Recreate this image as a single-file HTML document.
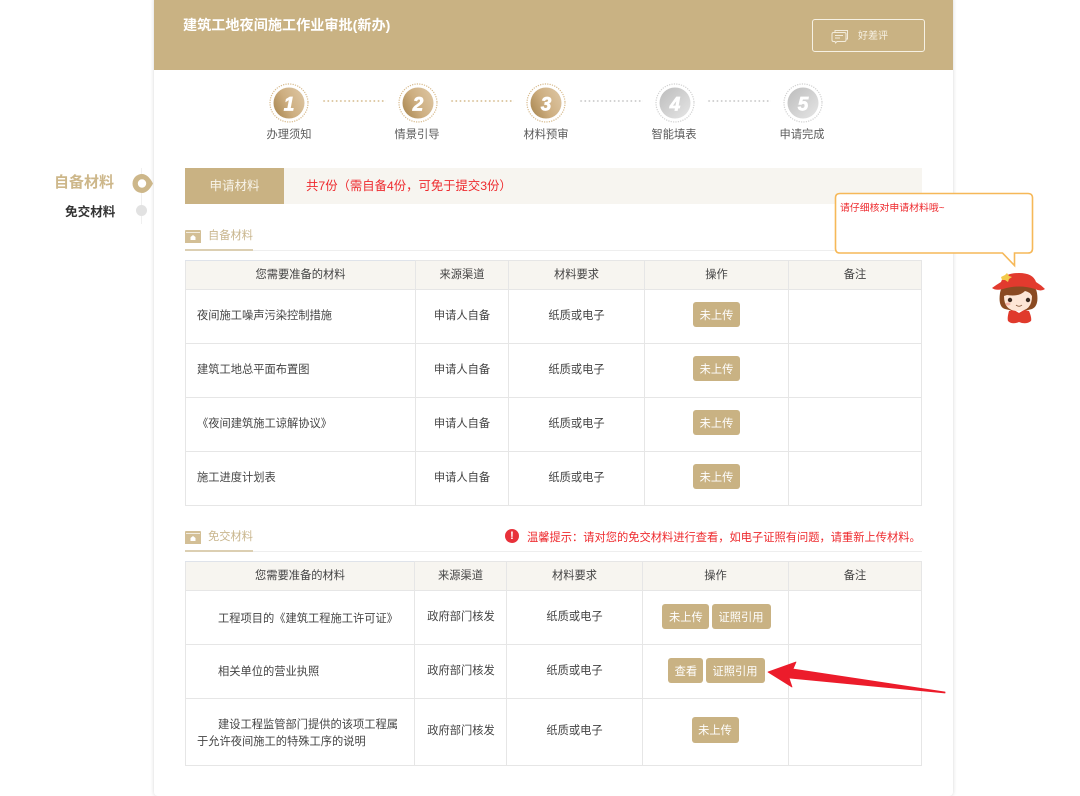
<!DOCTYPE html>
<html lang="zh-CN">
<head>
<meta charset="utf-8">
<title>建筑工地夜间施工作业审批(新办)</title>
<style>
html,body{margin:0;padding:0;background:#fff;}
body{width:1080px;height:785px;overflow:hidden;position:relative;font-family:"Liberation Sans","Noto Sans CJK SC",sans-serif;color:#444;font-size:11.25px;}
.a{position:absolute;white-space:nowrap;}
#card{position:absolute;left:154px;top:-4px;width:799px;height:800px;background:#fff;border-radius:4px;box-shadow:0 0 4px rgba(0,0,0,.16);}
#head{position:absolute;left:154px;top:0;width:799px;height:70px;background:#c9b283;}
.c{position:absolute;top:83px;width:40px;height:40px;}
.c text{font-family:"Liberation Sans",sans-serif;font-size:19px;font-weight:700;font-style:italic;fill:#fff;stroke:#fff;stroke-width:.7px;text-anchor:middle;}
.lab{position:absolute;top:128px;width:80px;text-align:center;font-size:11.25px;line-height:15px;color:#5a5a5a;}
.dots{position:absolute;top:100px;width:64px;height:2px;background-image:radial-gradient(circle,var(--d) .8px,transparent 1.1px);background-size:4.2px 2px;}
table{position:absolute;border-collapse:collapse;table-layout:fixed;background:#fff;}
td,th{border:1px solid #e6e6e6;text-align:center;font-weight:400;font-size:11.25px;color:#444;padding:0;line-height:20px;}
th{background:#f7f5f0;}
td{padding-bottom:2px;}
td.l{text-align:left;padding-left:11px;}
td.s{padding-left:1px;}
td.o{padding-left:2px;padding-bottom:0;}
.b{display:inline-block;position:relative;top:-1px;background:#c9b283;color:#fff;height:25px;line-height:29px;border-radius:3px;font-size:11.25px;text-align:center;vertical-align:middle;}
.st{position:absolute;left:185px;width:737px;height:1px;background:#eee;}
.su{position:absolute;left:185px;width:68px;height:2px;background:#dccfb2;}
</style>
</head>
<body>
<div id="card"></div>
<div id="head"></div>
<div class="a" style="left:183px;top:14.5px;font-size:14.15px;line-height:20px;font-weight:700;color:#fff;">建筑工地夜间施工作业审批(新办)</div>
<div class="a" style="left:812px;top:19px;width:111px;height:31px;border:1px solid #f6f1e4;border-radius:3px;"></div>
<svg class="a" style="left:831px;top:29px" width="18" height="15" viewBox="0 0 18 15" fill="none" stroke="#f3ecdc" stroke-width="1"><path d="M4 3.5V1.5H16.5V10H15"/><path d="M2.5 3.5H13.5Q15 3.5 15 5V11Q15 12.5 13.5 12.5H6L4.5 14L4 12.5H2.5Q1 12.5 1 11V5Q1 3.5 2.5 3.5Z"/><path d="M4 6.5H12M4 9H9"/></svg>
<div class="a" style="left:858px;top:30px;font-size:10px;line-height:14px;color:#f6f0e2;">好差评</div>

<svg width="0" height="0" style="position:absolute"><defs>
<linearGradient id="g1" x1="0" y1=".75" x2="1" y2=".25"><stop offset="0" stop-color="#ac8a55"/><stop offset=".45" stop-color="#cdae80"/><stop offset="1" stop-color="#dcc4a0"/></linearGradient>
<linearGradient id="g2" x1="0" y1="0" x2="1" y2="1"><stop offset="0" stop-color="#bcbcbc"/><stop offset="1" stop-color="#e6e6e6"/></linearGradient>
</defs></svg>

<svg class="c" style="left:269px" viewBox="0 0 40 40"><circle cx="20" cy="20" r="19" fill="#fff" stroke="#d9bd91" stroke-width="1.4" stroke-linecap="round" stroke-dasharray="0 2.4"/><circle cx="20" cy="20" r="15.5" fill="url(#g1)"/><text x="20" y="27.5">1</text></svg>
<svg class="c" style="left:398px" viewBox="0 0 40 40"><circle cx="20" cy="20" r="19" fill="#fff" stroke="#d9bd91" stroke-width="1.4" stroke-linecap="round" stroke-dasharray="0 2.4"/><circle cx="20" cy="20" r="15.5" fill="url(#g1)"/><text x="20" y="27.5">2</text></svg>
<svg class="c" style="left:526px" viewBox="0 0 40 40"><circle cx="20" cy="20" r="19" fill="#fff" stroke="#d9bd91" stroke-width="1.4" stroke-linecap="round" stroke-dasharray="0 2.4"/><circle cx="20" cy="20" r="15.5" fill="url(#g1)"/><text x="20" y="27.5">3</text></svg>
<svg class="c" style="left:655px" viewBox="0 0 40 40"><circle cx="20" cy="20" r="19" fill="#fff" stroke="#d3d3d3" stroke-width="1.4" stroke-linecap="round" stroke-dasharray="0 2.4"/><circle cx="20" cy="20" r="15.5" fill="url(#g2)"/><text x="20" y="27.5">4</text></svg>
<svg class="c" style="left:783px" viewBox="0 0 40 40"><circle cx="20" cy="20" r="19" fill="#fff" stroke="#d3d3d3" stroke-width="1.4" stroke-linecap="round" stroke-dasharray="0 2.4"/><circle cx="20" cy="20" r="15.5" fill="url(#g2)"/><text x="20" y="27.5">5</text></svg>

<div class="dots" style="left:322px;--d:#dcc6a0"></div>
<div class="dots" style="left:450px;--d:#dcc6a0"></div>
<div class="dots" style="left:579px;--d:#cfcfcf"></div>
<div class="dots" style="left:707px;--d:#cfcfcf"></div>

<div class="lab" style="left:249px">办理须知</div>
<div class="lab" style="left:377px">情景引导</div>
<div class="lab" style="left:506px">材料预审</div>
<div class="lab" style="left:634px">智能填表</div>
<div class="lab" style="left:762px">申请完成</div>

<!-- side nav -->
<div class="a" style="left:141px;top:168px;width:1px;height:56px;background:#f0f0f0;"></div>
<div class="a" style="left:54px;top:173px;font-size:15px;line-height:20px;font-weight:700;color:#cdb78a;">自备材料</div>
<div class="a" style="left:65px;top:203px;font-size:12.6px;line-height:18px;font-weight:700;color:#333;">免交材料</div>
<svg class="a" style="left:131px;top:173px" width="24" height="22" viewBox="0 0 24 22"><path d="M11 1A9.5 9.5 0 0 0 11 20Q17 20 22 10.5Q17 1 11 1Z" fill="#cdb78a"/><circle cx="11" cy="10.5" r="4.2" fill="#fff"/></svg>
<div class="a" style="left:136px;top:205px;width:11px;height:11px;border-radius:50%;background:#e2e2e2;"></div>

<!-- apply bar -->
<div class="a" style="left:185px;top:168px;width:737px;height:36px;background:#f7f5f0;"></div>
<div class="a" style="left:185px;top:168px;width:99px;height:36px;line-height:36px;background:#c9b283;color:#f8f4ea;text-align:center;font-size:12.5px;">申请材料</div>
<div class="a" style="left:306px;top:168px;height:36px;line-height:36px;color:#ee2a2e;font-size:12.35px;">共7份（需自备4份，可免于提交3份）</div>

<!-- section 1 -->
<svg class="a" style="left:185px;top:229px" width="16" height="14" viewBox="0 0 16 14"><path d="M0 2Q0 1 1 1H15Q16 1 16 2V14H0Z" fill="#d3bf96"/><path d="M1 3.5H15" stroke="#fff" stroke-width=".7"/><path d="M5.5 11V8L8 6L10.500 8V11Z" fill="#fff"/></svg>
<div class="a" style="left:208px;top:229px;font-size:11.25px;line-height:15px;color:#c9b68e;">自备材料</div>
<div class="st" style="top:250px"></div>
<div class="su" style="top:249px"></div>

<table style="left:185px;top:260px;width:737px;height:245px;">
<colgroup><col style="width:230px"><col style="width:93px"><col style="width:136px"><col style="width:144px"><col style="width:133px"></colgroup>
<tr style="height:29px"><th style="border-top-color:#dfe3ea;">您需要准备的材料</th><th>来源渠道</th><th>材料要求</th><th>操作</th><th>备注</th></tr>
<tr style="height:54px"><td class="l">夜间施工噪声污染控制措施</td><td>申请人自备</td><td>纸质或电子</td><td><span class="b" style="width:47px">未上传</span></td><td></td></tr>
<tr style="height:54px"><td class="l">建筑工地总平面布置图</td><td>申请人自备</td><td>纸质或电子</td><td><span class="b" style="width:47px">未上传</span></td><td></td></tr>
<tr style="height:54px"><td class="l">《夜间建筑施工谅解协议》</td><td>申请人自备</td><td>纸质或电子</td><td><span class="b" style="width:47px">未上传</span></td><td></td></tr>
<tr style="height:54px"><td class="l">施工进度计划表</td><td>申请人自备</td><td>纸质或电子</td><td><span class="b" style="width:47px">未上传</span></td><td></td></tr>
</table>

<!-- section 2 -->
<svg class="a" style="left:185px;top:530px" width="16" height="14" viewBox="0 0 16 14"><path d="M0 2Q0 1 1 1H15Q16 1 16 2V14H0Z" fill="#d3bf96"/><path d="M1 3.5H15" stroke="#fff" stroke-width=".7"/><path d="M5.5 11V8L8 6L10.500 8V11Z" fill="#fff"/></svg>
<div class="a" style="left:208px;top:530px;font-size:11.25px;line-height:15px;color:#c9b68e;">免交材料</div>
<div class="st" style="top:551px"></div>
<div class="su" style="top:550px"></div>
<div class="a" style="left:505px;top:529px;width:14px;height:14px;border-radius:50%;background:#e8313a;color:#fff;text-align:center;font-size:11px;line-height:14px;font-weight:700;">!</div>
<div class="a" style="left:527px;top:530px;font-size:11.25px;line-height:16px;color:#ee2a2e;">温馨提示：请对您的免交材料进行查看，如电子证照有问题，请重新上传材料。</div>

<table style="left:185px;top:561px;width:737px;height:204px;">
<colgroup><col style="width:229px"><col style="width:92px"><col style="width:136px"><col style="width:146px"><col style="width:133px"></colgroup>
<tr style="height:29px"><th style="border-top-color:#dfe3ea;">您需要准备的材料</th><th>来源渠道</th><th>材料要求</th><th>操作</th><th>备注</th></tr>
<tr style="height:54px"><td class="l" style="padding-left:32px;padding-top:3px;padding-bottom:0;">工程项目的《建筑工程施工许可证》</td><td class="s">政府部门核发</td><td>纸质或电子</td><td class="o"><span class="b" style="width:47px">未上传</span> <span class="b" style="width:59px;margin-left:-1px">证照引用</span></td><td></td></tr>
<tr style="height:54px"><td class="l" style="padding-left:32px;padding-bottom:0;">相关单位的营业执照</td><td class="s">政府部门核发</td><td>纸质或电子</td><td class="o"><span class="b" style="width:35px">查看</span> <span class="b" style="width:59px;margin-left:-1px">证照引用</span></td><td></td></tr>
<tr style="height:67px"><td class="l" style="padding-right:14px;padding-top:3px;padding-bottom:0;line-height:17px;white-space:normal;"><span style="display:inline-block;width:21px"></span>建设工程监管部门提供的该项工程属于允许夜间施工的特殊工序的说明</td><td class="s">政府部门核发</td><td>纸质或电子</td><td class="o" style="padding-left:0;padding-right:1px;"><span class="b" style="width:47px;top:-2px;height:26px;">未上传</span></td><td></td></tr>
</table>

<!-- arrow -->
<svg class="a" style="left:760px;top:655px" width="190" height="40" viewBox="0 0 190 40"><path d="M8 17L36 7L33 14L185 37L185 38L29 23L32 32Z" fill="#ec1c2b" stroke="#ec1c2b" stroke-width=".8" stroke-linejoin="round"/></svg>

<!-- bubble -->
<svg class="a" style="left:832px;top:191px" width="204" height="78" viewBox="0 0 204 78"><path d="M8 2.500H196Q200.500 2.500 200.500 7V57.500Q200.500 62 196 62H182.500L182.500 74.500L170.500 62H8Q3.500 62 3.500 57.500V7Q3.500 2.500 8 2.500Z" fill="#fff" stroke="#f6b858" stroke-width="1.6"/></svg>
<div class="a" style="left:840px;top:201px;font-size:9.9px;line-height:15px;color:#ee2a2e;">请仔细核对申请材料哦~</div>

<!-- mascot -->
<svg class="a" style="left:992px;top:271px" width="54" height="54" viewBox="0 0 54 54">
<path d="M8 22Q6 36 13 38Q26 42 40 38Q47 35 45 22Q44 12 26 12Q9 12 8 22Z" fill="#8a4a22"/>
<path d="M17 40Q15 47 16 50Q20 54 27 51Q34 54 39 50Q40 47 37 40Q27 37 17 40Z" fill="#e03a2c"/>
<path d="M22 39L27 42L32 39L27 37Z" fill="#fff"/>
<path d="M12 25Q12 40 26 40Q40 40 40 25Q38 21 33 20Q27 26 15 24Z" fill="#fde6d6"/>
<path d="M0 17Q4 14 9 11Q12 2 27 2Q41 2 44 11Q49 14 53 18Q49 21 43 18Q27 13 11 18Q4 20 0 17Z" fill="#e23a2e"/>
<path d="M9 6L13 4L15 2L17 5L20 6L17 8L16 11L13 9L10 9Z" fill="#f3c94a"/>
<circle cx="18" cy="29" r="2.200" fill="#3b2a20"/><circle cx="36" cy="29" r="2.200" fill="#3b2a20"/>
<ellipse cx="16" cy="33" rx="2.500" ry="1.500" fill="#f7b5a8"/>
<path d="M24 34Q27 36.500 30 34" stroke="#7a4a2a" fill="none" stroke-width=".8"/>
</svg>
</body>
</html>
